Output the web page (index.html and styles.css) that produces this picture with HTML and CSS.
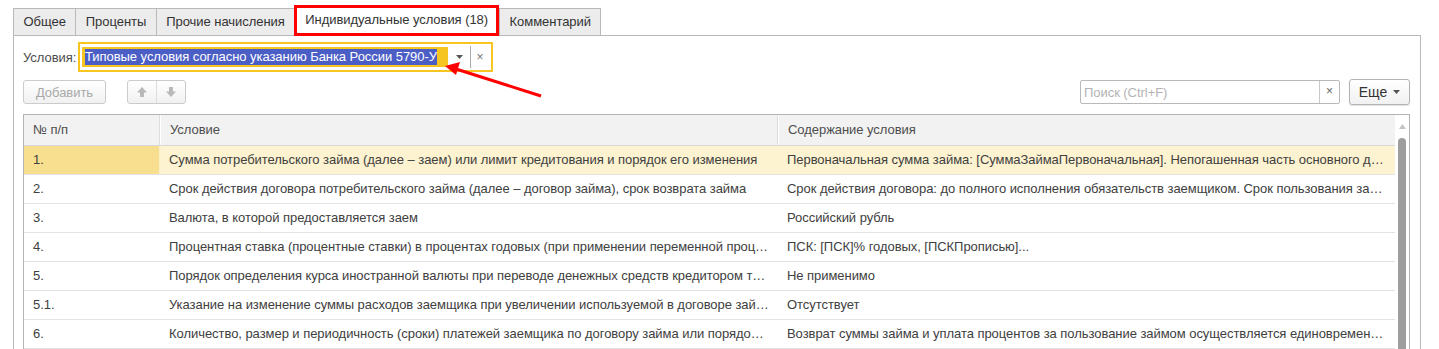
FILE: index.html
```html
<!DOCTYPE html>
<html lang="ru">
<head>
    <meta charset="UTF-8">
    <title>Индивидуальные условия</title>
    <link rel="stylesheet" href="styles.css">
</head>
<body>
    <div class="form">
        <div class="tabs">
            <div class="tab">Общее</div>
            <div class="tab">Проценты</div>
            <div class="tab">Прочие начисления</div>
            <div class="tab tab-active">Индивидуальные условия (18)</div>
            <div class="tab">Комментарий</div>
        </div>

        <div class="panel">
            <div class="cond-row">
                <span class="cond-label">Условия:</span>
                <div class="cond-frame">
                    <div class="cond-input">
                        <span class="cond-sel">Типовые условия согласно указанию Банка России 5790-У</span>
                    </div>
                    <div class="cond-drop">
                        <svg width="7" height="4" viewBox="0 0 7 4"><path d="M0 0H7L3.5 4Z" fill="#555"/></svg>
                    </div>
                    <div class="cond-sep"></div>
                    <div class="cond-clear">×</div>
                </div>
            </div>

            <div class="toolbar">
                <div class="btn btn-add">Добавить</div>
                <div class="btn arrows">
                    <div class="arrow-btn">
                        <svg width="12" height="12" viewBox="0 0 12 12"><path d="M6 1L11 6.5H8V11H4V6.5H1Z" fill="#b9b9b9"/></svg>
                    </div>
                    <div class="arrow-btn">
                        <svg width="12" height="12" viewBox="0 0 12 12"><path d="M6 11L11 5.5H8V1H4V5.5H1Z" fill="#b9b9b9"/></svg>
                    </div>
                </div>
                <div class="search">
                    <span class="search-text">Поиск (Ctrl+F)</span>
                    <span class="search-clear">×</span>
                </div>
                <div class="btn btn-more">Еще
                    <svg width="7" height="4" viewBox="0 0 7 4"><path d="M0 0H7L3.5 4Z" fill="#555"/></svg>
                </div>
            </div>

            <div class="grid">
                <div class="grid-body">
                    <div class="row row-head">
                        <div class="cell">№ п/п</div>
                        <div class="cell">Условие</div>
                        <div class="cell">Содержание условия</div>
                    </div>
                    <div class="row row-current">
                        <div class="cell">1.</div>
                        <div class="cell">Сумма потребительского займа (далее – заем) или лимит кредитования и порядок его изменения</div>
                        <div class="cell">Первоначальная сумма займа: [СуммаЗаймаПервоначальная]. Непогашенная часть основного долга по займу на дату заключения договора составляет [ОстатокОсновногоДолга]</div>
                    </div>
                    <div class="row">
                        <div class="cell">2.</div>
                        <div class="cell">Срок действия договора потребительского займа (далее – договор займа), срок возврата займа</div>
                        <div class="cell">Срок действия договора: до полного исполнения обязательств заемщиком. Срок пользования займом составляет [СрокЗайма]</div>
                    </div>
                    <div class="row">
                        <div class="cell">3.</div>
                        <div class="cell">Валюта, в которой предоставляется заем</div>
                        <div class="cell">Российский рубль</div>
                    </div>
                    <div class="row">
                        <div class="cell">4.</div>
                        <div class="cell">Процентная ставка (процентные ставки) в процентах годовых (при применении переменной процентной ставки)</div>
                        <div class="cell">ПСК: [ПСК]% годовых, [ПСКПрописью]...</div>
                    </div>
                    <div class="row">
                        <div class="cell">5.</div>
                        <div class="cell">Порядок определения курса иностранной валюты при переводе денежных средств кредитором третьему лицу</div>
                        <div class="cell">Не применимо</div>
                    </div>
                    <div class="row">
                        <div class="cell">5.1.</div>
                        <div class="cell">Указание на изменение суммы расходов заемщика при увеличении используемой в договоре займа переменной процентной ставки</div>
                        <div class="cell">Отсутствует</div>
                    </div>
                    <div class="row">
                        <div class="cell">6.</div>
                        <div class="cell">Количество, размер и периодичность (сроки) платежей заемщика по договору займа или порядок определения этих платежей</div>
                        <div class="cell">Возврат суммы займа и уплата процентов за пользование займом осуществляется единовременным платежом</div>
                    </div>
                </div>
                <div class="scroll">
                    <svg class="scroll-up" width="7" height="5" viewBox="0 0 7 5"><path d="M0 5H7L3.5 0Z" fill="#c4c4c4"/></svg>
                    <div class="scroll-thumb"></div>
                </div>
            </div>
        </div>

        <!-- red annotation arrow -->
        <svg class="pointer" width="1439" height="349" viewBox="0 0 1439 349">
            <line x1="541" y1="96" x2="456" y2="69" stroke="#f00" stroke-width="3"/>
            <path d="M445 66L460 62L456 75Z" fill="#f00"/>
        </svg>
    </div>
</body>
</html>
```

FILE: styles.css
```css
* {
    margin: 0;
    padding: 0;
    box-sizing: border-box;
}

body {
    font-family: 'Liberation Sans', Arial, sans-serif;
    font-size: 13px;
    letter-spacing: -0.05px;
    color: #404040;
    background: #fff;
    overflow: hidden;
}

.form {
    position: relative;
    height: 349px;
    padding-top: 5px;
}

/* tabs */
.tabs {
    display: flex;
    align-items: flex-end;
    height: 30px;
    margin-left: 13px;
}

.tab {
    height: 27px;
    line-height: 25px;
    padding: 0 9.5px;
    border: 1px solid #b9b9b9;
    border-bottom: none;
    background: #ececec;
    margin-right: -1px;
    white-space: nowrap;
    color: #333;
}

.tab-active {
    position: relative;
    z-index: 1;
    height: 31px;
    line-height: 24px;
    padding: 0 8px;
    border: 3px solid #f00;
    background: #fff;
    margin-bottom: -1px;
    margin-right: 0;
}

.panel {
    height: 314px;
    margin: 0 18px 0 13px;
    padding: 6px 10px 0 9px;
    border: 1px solid #b9b9b9;
    border-bottom: none;
}

/* conditions field */
.cond-row {
    display: flex;
    align-items: center;
    height: 30px;
}

.cond-label {
    width: 55px;
    color: #4d4d4d;
}

.cond-frame {
    display: flex;
    align-items: center;
    width: 415px;
    height: 30px;
    padding: 0 2px;
    border: 2px solid #f7c520;
}

.cond-input {
    display: flex;
    align-items: center;
    width: 366px;
    height: 20px;
    padding: 0 3px;
    background: #f7c520;
}

.cond-sel {
    height: 16px;
    line-height: 16px;
    background: #4b5ec6;
    color: #fff;
    white-space: nowrap;
}

.cond-drop {
    display: flex;
    align-items: center;
    justify-content: center;
    width: 22px;
    height: 22px;
}

.cond-sep {
    width: 1px;
    height: 22px;
    background: #a8a8a8;
}

.cond-clear {
    width: 18px;
    text-align: center;
    color: #777;
    font-size: 12px;
}

/* toolbar */
.toolbar {
    display: flex;
    align-items: center;
    height: 26px;
    margin-top: 7px;
}

.btn {
    display: flex;
    align-items: center;
    justify-content: center;
    height: 24px;
    border: 1px solid #cbcbcb;
    border-radius: 3px;
    background: linear-gradient(#fff, #f1f1f1);
}

.btn-add {
    width: 83px;
    color: #a9a9a9;
}

.arrows {
    width: 59px;
    margin-left: 21px;
}

.arrow-btn {
    display: flex;
    align-items: center;
    justify-content: center;
    flex: 1;
    height: 100%;
}

.arrow-btn + .arrow-btn {
    border-left: 1px solid #dcdcdc;
}

.search {
    display: flex;
    align-items: center;
    width: 260px;
    height: 24px;
    margin-left: auto;
    border: 1px solid #b9b9b9;
    border-radius: 2px;
}

.search-text {
    flex: 1;
    padding-left: 3px;
    color: #b3b3b3;
}

.search-clear {
    width: 20px;
    height: 100%;
    line-height: 21px;
    text-align: center;
    border-left: 1px solid #c8c8c8;
    color: #666;
    font-size: 12px;
}

.btn-more {
    width: 61px;
    height: 26px;
    gap: 6px;
    margin-left: 9px;
    border-color: #b3b3b3;
    box-shadow: 0 1px 1px rgba(0, 0, 0, 0.12);
    color: #333;
    font-size: 14px;
}

/* table */
.grid {
    display: flex;
    height: 236px;
    margin-top: 9px;
    border: 1px solid #b3b3b3;
    border-bottom: none;
}

.grid-body {
    flex: 1;
    overflow: hidden;
}

.row {
    display: grid;
    grid-template-columns: 136px 618px 1fr;
    height: 29px;
    border-bottom: 1px solid #e3e3e3;
}

.cell {
    padding: 0 9px;
    line-height: 28px;
    white-space: nowrap;
    overflow: hidden;
    text-overflow: ellipsis;
}

.row-head {
    height: 31px;
    background: #f2f2f2;
    border-bottom-color: #d9d9d9;
    color: #4d4d4d;
}

.row-head .cell {
    line-height: 30px;
    border-left: 1px solid #fff;
    border-right: 1px solid #dedede;
}

.row-head .cell:first-child {
    border-left: none;
}

.row-head .cell:last-child {
    border-right: none;
}

.row-current .cell {
    background: #fdf3d0;
}

.row-current .cell:first-child {
    background: #f8df8f;
    border-right: 1px solid #fbefc8;
}

.scroll {
    display: flex;
    flex-direction: column;
    align-items: center;
    width: 14px;
}

.scroll-up {
    margin-top: 9px;
}

.scroll-thumb {
    flex: 1;
    width: 8px;
    margin-top: 9px;
    border-radius: 4px 4px 0 0;
    background: #9e9e9e;
}

/* annotation */
.pointer {
    position: absolute;
    top: 0;
    left: 0;
    pointer-events: none;
}
```
